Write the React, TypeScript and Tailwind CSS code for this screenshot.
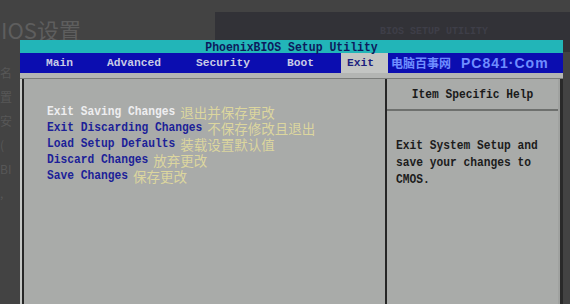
const mono = "font-['Liberation_Mono','DejaVu_Sans_Mono',monospace] font-bold";
const cjk = "font-['Noto_Sans_CJK_SC','Noto_Sans',sans-serif]";

const menuItems = [
  { label: 'Exit Saving Changes', note: '退出并保存更改', active: true },
  { label: 'Exit Discarding Changes', note: '不保存修改且退出' },
  { label: 'Load Setup Defaults', note: '装载设置默认值' },
  { label: 'Discard Changes', note: '放弃更改' },
  { label: 'Save Changes', note: '保存更改' },
];

function Backdrop() {
  return (
    <>
      {/* faded article behind the photo */}
      <div className={`absolute left-[1px] top-[14px] text-[22px] leading-[30px] text-[#5e5e5e] ${cjk}`}>
        IOS设置
      </div>
      <div className={`absolute left-[0px] top-[64px] flex flex-col gap-[6px] text-[12px] leading-[18px] text-[#575757] ${cjk}`}>
        <span>名</span>
        <span>置</span>
        <span>安</span>
        <span>(</span>
        <span>BI</span>
        <span>,</span>
      </div>
      <div className="absolute left-[215px] top-[12px] w-[355px] h-[40px] bg-[#323237]">
        <div className={`pl-[165px] pt-[12px] text-[10px] text-[#3e3e48] ${mono}`}>BIOS SETUP UTILITY</div>
      </div>
    </>
  );
}

export default function App() {
  return (
    <div className="relative w-[570px] h-[304px] overflow-hidden bg-[#434343]">
      <Backdrop />

      {/* BIOS screen */}
      <div className="absolute left-[20px] top-[40px] w-[543px] h-[264px] flex flex-col bg-[#a9aba9]">
        <div className={`h-[13px] bg-[#22b5b8] text-center text-[11.5px] leading-[13px] text-[#0d1a5c] ${mono}`}>
          <span className="inline-block scale-y-[1.15]">PhoenixBIOS Setup Utility</span>
        </div>

        <div className={`h-[20px] flex items-stretch bg-[#0b0db0] text-[11.25px] leading-[20px] text-[#c9cbe6] ${mono}`}>
          <span className="pl-[26px] w-[87px]">Main</span>
          <span className="w-[89px]">Advanced</span>
          <span className="w-[91px]">Security</span>
          <span className="w-[54px]">Boot</span>
          <span className="w-[47px] pl-[6px] bg-[#c3c5c3] text-[#1b1f7e]">Exit</span>
          <span className="flex-1 flex items-center gap-[10px] pl-[3px] text-[#6f8dff]">
            <span className={`text-[12px] leading-[20px] font-bold ${cjk}`}>电脑百事网</span>
            <span className="font-['Liberation_Sans',sans-serif] font-bold text-[14px] tracking-[1px]">PC841·Com</span>
          </span>
        </div>

        <div className="h-[5px] bg-[#b3b5b3]" />

        <div className="flex-1 flex border-t border-[#7a7c7a]">
          <div className="w-[2px] bg-[#c4c6c4]" />
          <div className="w-[2px] bg-[#262626]" />

          {/* left: options */}
          <div className="w-[361px] pt-[25px] pl-[23px]">
            {menuItems.map((item) => (
              <div key={item.label} className="h-[16px] flex items-center whitespace-nowrap">
                <span
                  className={`inline-block scale-y-[1.2] text-[11.25px] leading-[13px] ${mono} ${
                    item.active ? 'text-[#eeeef0]' : 'text-[#1c1f98]'
                  }`}
                >
                  {item.label}
                </span>
                <span className={`ml-[5px] text-[13.5px] leading-[16px] text-[#e6df9c]/85 ${cjk}`}>{item.note}</span>
              </div>
            ))}
          </div>

          <div className="w-[2px] bg-[#262626]" />

          {/* right: help */}
          <div className="w-[171px] flex flex-col">
            <div className={`h-[32px] flex items-center justify-center border-b-2 border-[#6e706e] text-[11.25px] text-[#1a1a1a] ${mono}`}>
              <span className="inline-block scale-y-[1.2]">Item Specific Help</span>
            </div>
            <div className={`pt-[25px] pl-[9px] text-[11.25px] leading-[17px] text-[#1c1c1c] ${mono}`}>
              <div className="scale-y-[1.2] origin-top-left">Exit System Setup and</div>
              <div className="scale-y-[1.2] origin-top-left">save your changes to</div>
              <div className="scale-y-[1.2] origin-top-left">CMOS.</div>
            </div>
          </div>

          <div className="w-[2px] bg-[#a0a2a0]" />
          <div className="w-[3px] bg-[#2a2a2a]" />
        </div>
      </div>
    </div>
  );
}
